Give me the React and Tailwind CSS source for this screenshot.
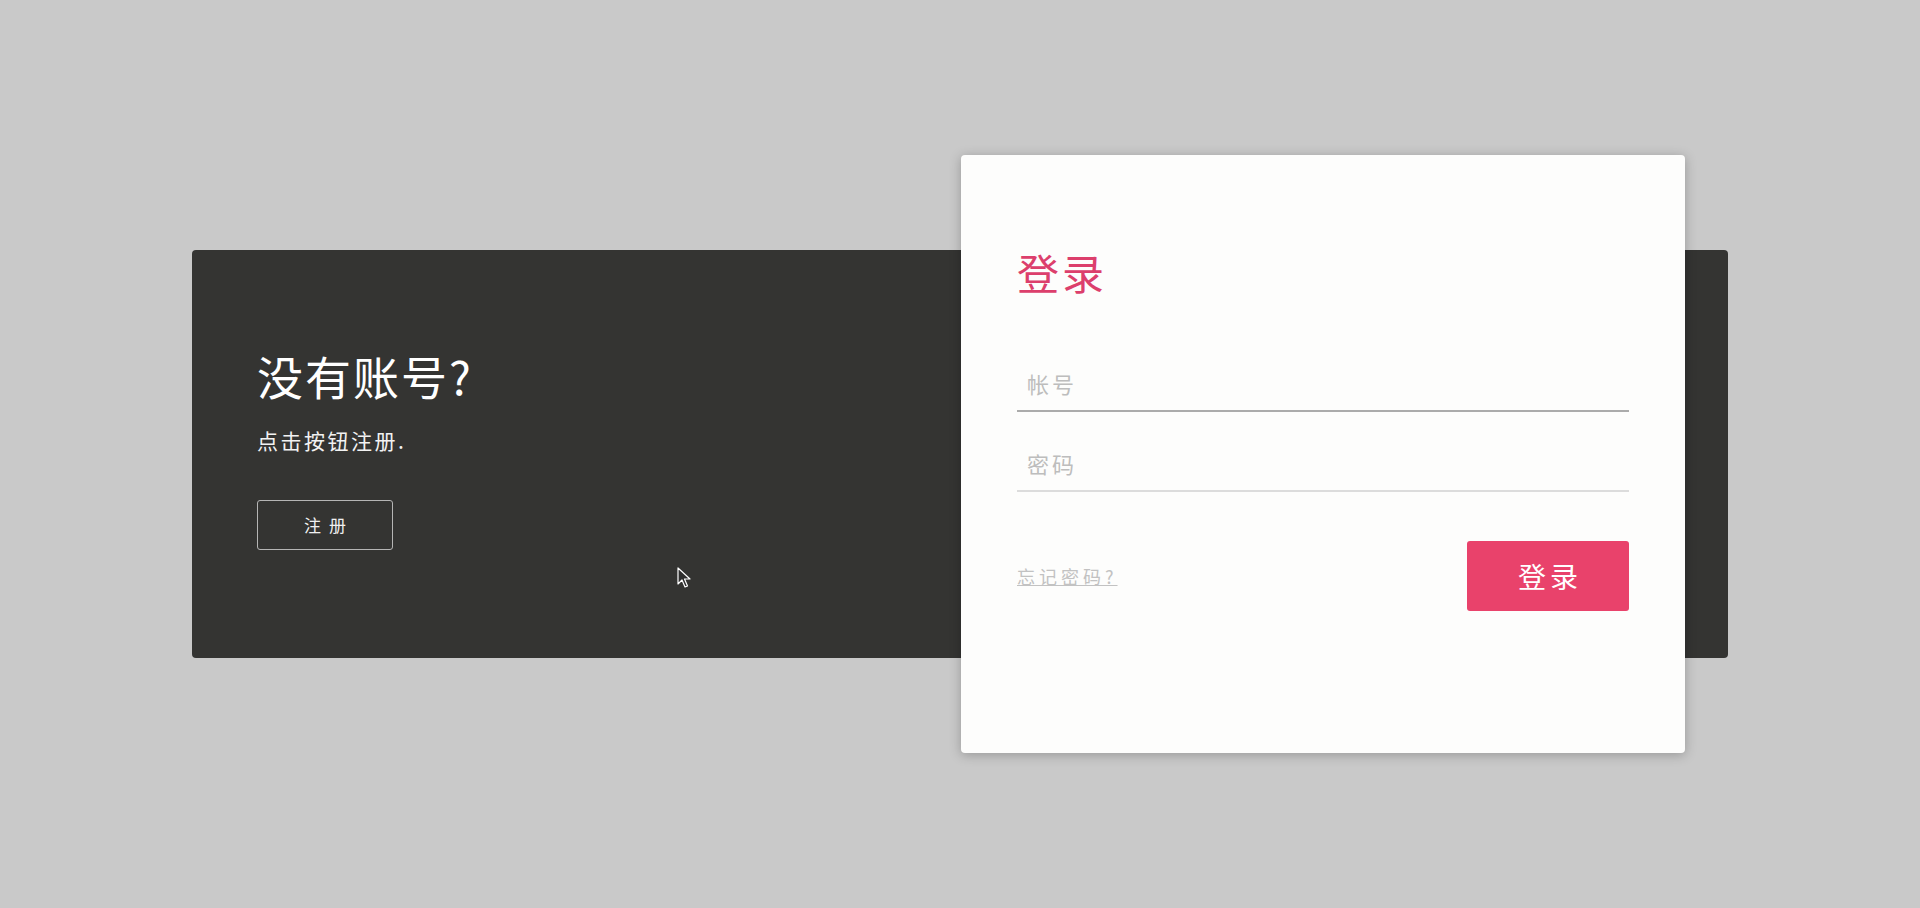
import React from 'react';

const cjk = { fontFamily: '"Noto Sans CJK SC", "Noto Sans", sans-serif' };

function Cursor() {
  return (
    <svg className="absolute left-[485px] top-[317px]" width="14" height="22" viewBox="0 0 14 22">
      <path d="M1 1 L1 17 L5 13 L8 20 L10.5 19 L7.5 12 L13 12 Z" fill="#2f2f2f" stroke="#fff" strokeWidth="1.2" strokeLinejoin="round" />
    </svg>
  );
}

export default function App() {
  return (
    <div className="w-full h-[908px] bg-[#c9c9c9] flex items-center justify-center" style={cjk}>
      {/* dark panel */}
      <div className="relative w-[1536px] h-[408px] bg-[#343432] rounded-[4px]">
        <div className="flex flex-col items-start pl-[65px] pt-[102px]">
          <h2 className="text-[46px] leading-none text-white tracking-[2px] font-normal">没有账号?</h2>
          <p className="mt-[32px] text-[21px] leading-none text-[#f2f2f2] tracking-[2.5px]">点击按钮注册.</p>
          <button className="mt-[49px] w-[136px] h-[50px] border border-[#b5b5b5] rounded-[3px] text-[17px] text-[#f0f0f0] tracking-[8px] pl-[8px]">
            注册
          </button>
        </div>
        <Cursor />

        {/* login card */}
        <div className="absolute left-[769px] top-[-95px] w-[724px] h-[598px] bg-[#fdfdfc] rounded-[4px] shadow-[0_2px_12px_rgba(0,0,0,0.25)] px-[56px] pt-[96px]">
          <h1 className="text-[42px] leading-none text-[#dc3f6c] tracking-[3px] font-normal">登录</h1>
          <div className="mt-[69px] flex flex-col gap-[30px]">
            <input
              placeholder="帐号"
              className="w-full h-[50px] border-b-2 border-[#ababab] bg-transparent px-[10px] pb-[7px] text-[22px] tracking-[3px] outline-none placeholder:text-[#bdbdbd]"
            />
            <input
              placeholder="密码"
              type="password"
              className="w-full h-[50px] border-b-2 border-[#dcdcdc] bg-transparent px-[10px] pb-[7px] text-[22px] tracking-[3px] outline-none placeholder:text-[#bdbdbd]"
            />
          </div>
          <div className="mt-[49px] flex items-center justify-between">
            <a href="#" className="text-[18px] text-[#c2c2c2] underline tracking-[4px]">忘记密码?</a>
            <button className="w-[162px] h-[70px] bg-[#e9426b] rounded-[3px] text-[28px] text-white tracking-[4px] pl-[4px]">
              登录
            </button>
          </div>
        </div>
      </div>
    </div>
  );
}
